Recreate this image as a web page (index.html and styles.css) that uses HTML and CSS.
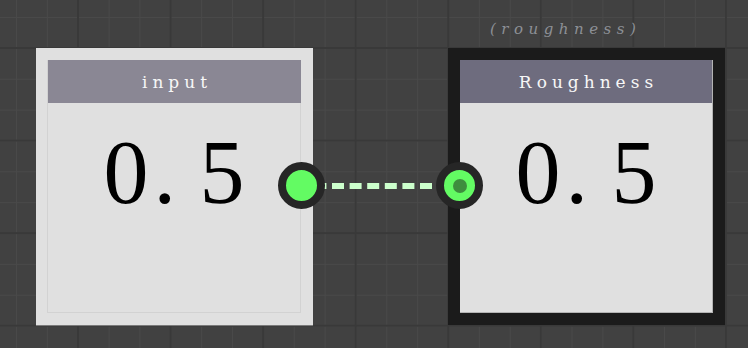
FILE: index.html
```html
<!DOCTYPE html>
<html lang="en">
<head>
  <meta charset="UTF-8" />
  <meta name="viewport" content="width=device-width, initial-scale=1.0"/>
  <title>Node Graph</title>
  <link rel="stylesheet" href="styles.css">
</head>
<body>

  <div class="canvas">
    <!-- wire between the two sockets -->
    <svg class="wire" width="748" height="348">
      <line x1="314.4" y1="186" x2="436" y2="186" />
    </svg>

    <div class="node node-input">
      <div class="panel">
        <div class="node-title">input</div>
        <div class="node-value">0. 5</div>
      </div>
      <span class="socket socket-out"></span>
    </div>

    <div class="node node-output">
      <span class="node-label">(roughness)</span>
      <div class="panel">
        <div class="node-title">Roughness</div>
        <div class="node-value">0. 5</div>
      </div>
      <span class="socket socket-in"></span>
    </div>
  </div>

</body>
</html>
```

FILE: styles.css
```css
body {
  margin: 0;
  padding: 0;
  background: #414141;
  font-family: "Liberation Serif", "Times New Roman", serif;
}

.canvas {
  position: relative;
  width: 748px;
  height: 348px;
  overflow: hidden;
  background-color: #414141;
  background-image:
    linear-gradient(to right, #393939 2px, transparent 2px),
    linear-gradient(to bottom, #393939 2px, transparent 2px),
    linear-gradient(to right, #494949 1px, transparent 1px),
    linear-gradient(to bottom, #494949 1px, transparent 1px);
  background-size: 92.57px 92.57px, 92.57px 92.57px, 30.86px 30.86px, 30.86px 30.86px;
  background-position: 77px 47px, 77px 47px, 16px 17px, 16px 17px;
}

.wire {
  position: absolute;
  left: 0;
  top: 0;
}

.wire line {
  stroke: #ccffcc;
  stroke-width: 6;
  stroke-dasharray: 12 5.6;
}

.node {
  position: absolute;
  top: 48px;
  width: 277px;
  height: 277px;
  box-sizing: border-box;
  padding: 12px 12px 12px 11px;
}

.node-input {
  left: 36px;
  background: #e0e0e0;
  box-shadow: 0 1px 0 #7a7a7a;
}

.node-output {
  left: 448px;
  background: #1b1b1b;
  padding: 12px;
}

.panel {
  height: 100%;
  box-sizing: border-box;
  background: #e0e0e0;
  border: 1px solid #d2d2d2;
  border-top: none;
}

.node-output .panel {
  border: none;
  border-right: 1px solid #b4b4b4;
  border-bottom: 1px solid #b4b4b4;
}

.node-title {
  height: 43px;
  line-height: 43px;
  padding-top: 1px;
  box-sizing: border-box;
  margin: 0 -1px 0 0;
  background: #8a8794;
  color: #f7f7f7;
  font-family: "DejaVu Serif", serif;
  font-size: 17px;
  letter-spacing: 5px;
  text-indent: 5px;
  text-align: center;
}

.node-output .node-title {
  background: #6e6c7e;
  margin: 0;
}

.node-value {
  margin-top: 25px;
  font-size: 90px;
  line-height: 90px;
  letter-spacing: 5px;
  word-spacing: -9px;
  text-indent: 5px;
  text-align: center;
  color: #000;
  white-space: pre;
}

.node-label {
  position: absolute;
  left: 42px;
  top: -28px;
  color: #8d9096;
  font-family: "DejaVu Serif", serif;
  font-style: italic;
  font-size: 15px;
  letter-spacing: 5.5px;
  white-space: nowrap;
}

.socket {
  position: absolute;
  top: 114px;
  width: 31px;
  height: 31px;
  border: 8px solid #262626;
  border-radius: 50%;
  background: #63fb63;
}

.socket-out {
  right: -12px;
}

.socket-in {
  left: -12px;
}

.socket-in::after {
  content: "";
  position: absolute;
  left: 8.5px;
  top: 8.5px;
  width: 14px;
  height: 14px;
  border-radius: 50%;
  background: #3e8e3e;
}
```
